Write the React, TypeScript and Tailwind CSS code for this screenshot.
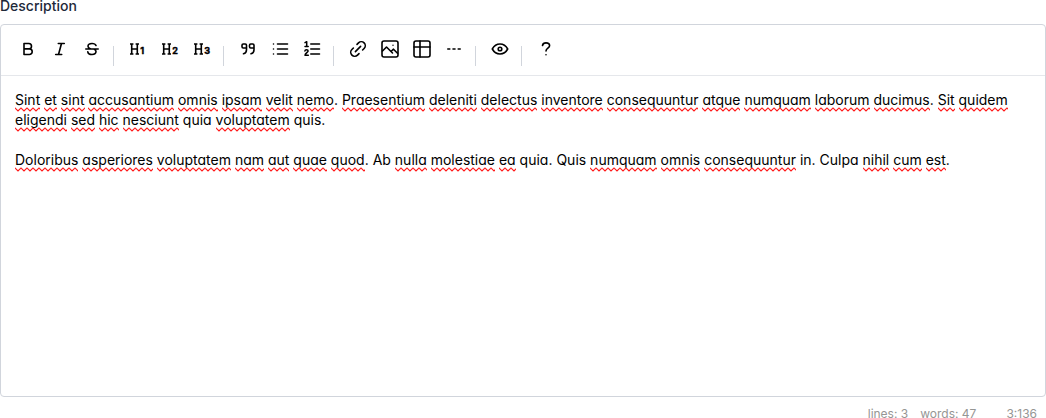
import React from "react";

const CORRECT = new Set(["quis.", "quia", "quia.", "Ab", "Quis", "in.", "Culpa"]);

function Words({ text }: { text: string }) {
  return (
    <>
      {text.split(" ").map((w, i) => {
        const dot = w.endsWith(".");
        const core = dot ? w.slice(0, -1) : w;
        return (
          <React.Fragment key={i}>
            {i > 0 && " "}
            {CORRECT.has(w) ? (
              w
            ) : (
              <>
                <span className="bg-[url('data:image/svg+xml,%3Csvg%20xmlns=%22http://www.w3.org/2000/svg%22%20width=%226%22%20height=%225%22%3E%3Cpath%20d=%22M-1.5%202.5L0%201L3%204L6%201L7.5%202.5%22%20fill=%22none%22%20stroke=%22%23ff1a1a%22%20stroke-width=%221.2%22/%3E%3C/svg%3E')] bg-[position:0_100%] bg-repeat-x pb-[4px]">
                  {core}
                </span>
                {dot && "."}
              </>
            )}
          </React.Fragment>
        );
      })}
    </>
  );
}

function Tool({ name, children }: { name: string; children: React.ReactNode }) {
  return (
    <button aria-label={name} className="flex h-8 w-8 items-center justify-center">
      <svg viewBox="0 0 20 20" className="h-5 w-5" fill="none" stroke="black" strokeWidth="1.6" strokeLinecap="round" strokeLinejoin="round">
        {children}
      </svg>
    </button>
  );
}

function Sep() {
  return <i className="mt-[13px] mr-2 ml-[5px] h-5 w-px bg-gray-300" />;
}

function Heading({ level }: { level: string }) {
  return (
    <Tool name={`Heading ${level}`}>
      <path d="M3.7 5v10M9.3 5v10M4 10h5.4M2 5h3.4M7.6 5H11M2 15h3.4M7.6 15H11" strokeLinecap="butt" />
      <text x="12.3" y="15.3" fill="black" stroke="black" strokeWidth=".4" className="font-['Inter'] text-[9px] font-bold">{level}</text>
    </Tool>
  );
}

export default function App() {
  return (
    <div className="h-[418px] w-[1046px] bg-white font-['Inter',sans-serif]">
      <div className="h-6 text-sm leading-[12px] font-medium text-gray-800">Description</div>
      <div className="flex h-[373px] flex-col rounded border border-gray-300">
        <div className="flex h-[51px] items-start border-b border-gray-200 pt-2 pl-[11px]">
          <Tool name="Bold"><path d="M6 4.5h4.8a2.7 2.7 0 0 1 0 5.4H6zM6 9.9h5.4a2.8 2.8 0 0 1 0 5.6H6z" /></Tool>
          <Tool name="Italic"><path d="M8.3 4.5h6M5.7 15.5h6M11.5 4.5l-3 11" /></Tool>
          <Tool name="Strikethrough"><path d="M14 6.5c-.5-1.3-2-2-4-2-2.4 0-4 1-4 2.7 0 1.2.8 2 2.4 2.5M3.8 10h12.4M12.3 10.3c1.2.5 1.7 1.2 1.7 2.3 0 1.8-1.6 2.9-4 2.9s-4-1-4.2-2.7" /></Tool>
          <Sep />
          <Heading level="1" /><Heading level="2" /><Heading level="3" />
          <Sep />
          <Tool name="Quote"><path d="M8.5 6.5v-.3q0-1.2-1.2-1.2H5.2Q4 5 4 6.2v1.6Q4 9 5.2 9h3.3zM8.5 9v1.8c0 2.3-1 3.6-3 4M16 6.5v-.3q0-1.2-1.2-1.2h-2.1q-1.2 0-1.2 1.2v1.6q0 1.2 1.2 1.2H16zM16 9v1.8c0 2.3-1 3.6-3 4" /></Tool>
          <Tool name="Bullet list"><path d="M7.5 5h10M7.5 10h10M7.5 15h10M3.5 5h.01M3.5 10h.01M3.5 15h.01" /></Tool>
          <Tool name="Numbered list"><path d="M8.8 5h8.7M8.8 10h8.7M8.8 15h8.7" /><path d="M3 3.6l1.7-.9v4.8M3 7.5h3.2M2.9 12c.2-1.7 3.2-1.5 3.2.1 0 1.3-3 2-3.1 4.2h3.3" strokeWidth="1.5" /></Tool>
          <Sep />
          <Tool name="Link"><path d="m7.4 12.6 5.2-5.2M9 5.4l1.5-1.5a3.9 3.9 0 0 1 5.6 5.6L14.6 11M5.4 9l-1.5 1.5a3.9 3.9 0 0 0 5.6 5.6l1.5-1.5" /></Tool>
          <Tool name="Image"><rect x="2" y="2" width="16" height="16" rx="2" /><path d="m2.5 12 4-4 6 6M11 12.5l2.5-2.3 4 4" /><path d="M13 6.2h.01" strokeWidth="1.4" /></Tool>
          <Tool name="Table"><rect x="2" y="2" width="16" height="16" rx="2" /><path d="M2 8h16M8 2v16" /></Tool>
          <Tool name="Horizontal rule"><path d="M3.8 10h2M9 10h2M14.2 10h2" /></Tool>
          <Sep />
          <Tool name="Preview"><path d="M2.3 10c1.8-3.3 4.4-5 7.7-5s5.9 1.7 7.7 5c-1.8 3.3-4.4 5-7.7 5s-5.9-1.7-7.7-5z" /><circle cx="10" cy="10" r="1.8" /></Tool>
          <Sep />
          <Tool name="Help"><path d="M6.5 6.5c.3-1.7 1.5-2.6 3.5-2.6 2.2 0 3.6 1.1 3.6 2.9 0 2.4-3.6 2.5-3.6 5.2M10 15.7h.01" /></Tool>
        </div>
        <div className="px-[14px] pt-[14px] text-sm leading-5 text-black [font-feature-settings:'cv11']">
          <p className="whitespace-nowrap"><Words text="Sint et sint accusantium omnis ipsam velit nemo. Praesentium deleniti delectus inventore consequuntur atque numquam laborum ducimus. Sit quidem" /></p>
          <p><Words text="eligendi sed hic nesciunt quia voluptatem quis." /></p>
          <p className="mt-5"><Words text="Doloribus asperiores voluptatem nam aut quae quod. Ab nulla molestiae ea quia. Quis numquam omnis consequuntur in. Culpa nihil cum est." /></p>
        </div>
      </div>
      <div className="flex h-[21px] justify-end pt-[10px] pr-[9px] text-xs leading-[14px] text-[#959694]">
        <span>lines: 3</span><span className="ml-3">words: 47</span><span className="ml-[30px]">3:136</span>
      </div>
    </div>
  );
}
